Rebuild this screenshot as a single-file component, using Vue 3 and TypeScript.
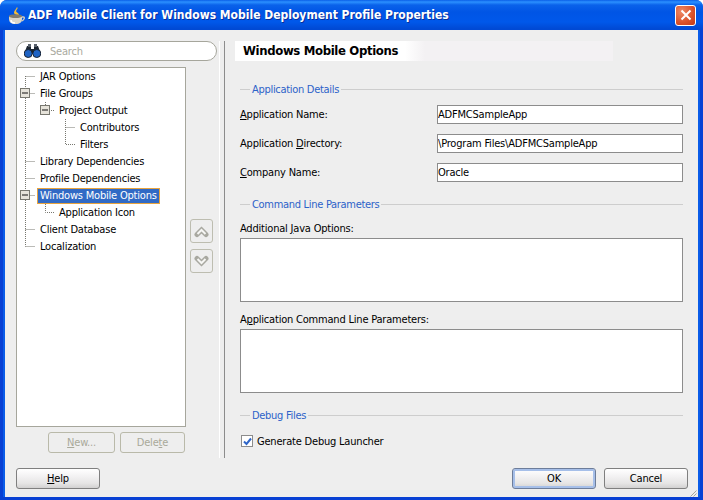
<script setup lang="ts">
interface TreeRow {
  label: string
  level: number
  selected?: boolean
}

const rows: TreeRow[] = [
  { label: 'JAR Options', level: 0 },
  { label: 'File Groups', level: 0 },
  { label: 'Project Output', level: 1 },
  { label: 'Contributors', level: 2 },
  { label: 'Filters', level: 2 },
  { label: 'Library Dependencies', level: 0 },
  { label: 'Profile Dependencies', level: 0 },
  { label: 'Windows Mobile Options', level: 0, selected: true },
  { label: 'Application Icon', level: 1 },
  { label: 'Client Database', level: 0 },
  { label: 'Localization', level: 0 },
]

// connector lines, in tree coordinates (tree box starts at 16,67)
const connectors = [
  'M9.5 9V179.5',
  'M9.5 9.5H19',
  'M9.5 26.5H19',
  'M29.5 35V43.5H39',
  'M49.5 52V77.5H59',
  'M49.5 60.5H59',
  'M9.5 94.5H19',
  'M9.5 111.5H19',
  'M9.5 128.5H19',
  'M29.5 137V145.5H39',
  'M9.5 162.5H19',
  'M9.5 179.5H19',
]

const expanders = [
  { x: 4, y: 21 },
  { x: 24, y: 38 },
  { x: 4, y: 123 },
]
</script>

<template>
  <div class="window">
    <header class="titlebar">
      <svg class="app-icon" width="18" height="18" viewBox="0 0 18 18">
        <path d="M9 0c2 2-2 3-.5 5 1 1 3 1.500 2.500 4-1-1.500-5-1-5-3.500 0-2 2-3 3-5.500z" fill="#f6bd35" />
        <path d="M1 9h13v3c0 3-2 5-6.500 5S1 15 1 12z" fill="#d9d5ca" />
        <path d="M3 13c0 2 2 3 4 3" fill="none" stroke="#fff" stroke-width="1.500" />
        <ellipse cx="7.500" cy="9.200" rx="6.500" ry="1.900" fill="#7f7a6e" />
        <path d="M14 10h1.500c1.500 0 1 3-2 4" fill="none" stroke="#cfcabd" stroke-width="1.400" />
      </svg>
      <span class="title">ADF Mobile Client for Windows Mobile Deployment Profile Properties</span>
      <button class="close" type="button" aria-label="Close">
        <svg width="12" height="12" viewBox="0 0 12 12">
          <path d="M1.500 1.500l9 9M10.500 1.500l-9 9" stroke="#fff" stroke-width="2" />
        </svg>
      </button>
    </header>

    <div class="body">
      <main class="main">
        <section class="nav">
          <div class="search">
            <svg width="17" height="14" viewBox="0 0 17 14">
              <path d="M3 2h4v3h3V2h4l3 8H0z" fill="#1c2530" />
              <circle cx="4.200" cy="9.500" r="4" fill="#1f63c4" stroke="#1c2530" />
              <circle cx="12.800" cy="9.500" r="4" fill="#1f63c4" stroke="#1c2530" />
              <rect x="4" y="0" width="3" height="3" fill="#59616b" />
              <rect x="10" y="0" width="3" height="3" fill="#59616b" />
            </svg>
            <span class="search-text">Search</span>
          </div>

          <div class="tree-row">
            <div class="tree">
              <svg class="tree-lines" width="170" height="200" viewBox="0 0 170 200">
                <path
                  v-for="d in connectors"
                  :key="d"
                  :d="d"
                  fill="none"
                  stroke="#77776f"
                  stroke-dasharray="1 1"
                />
                <g v-for="e in expanders" :key="e.x + '-' + e.y">
                  <rect :x="e.x + 0.5" :y="e.y + 0.5" width="9" height="9" fill="#e6e3da" stroke="#77776f" />
                  <path :d="`M${e.x + 2} ${e.y + 5}h6`" stroke="#111" fill="none" />
                </g>
              </svg>
              <div
                v-for="row in rows"
                :key="row.label"
                class="tree-item"
                :class="'level-' + row.level"
              >
                <span :class="{ selected: row.selected }">{{ row.label }}</span>
              </div>
            </div>
            <div class="order-buttons">
              <button class="order" type="button" aria-label="Move up">
                <svg width="15" height="13" viewBox="0 0 15 13">
                  <path d="M3 9.500L7.500 5l4.500 4.500" fill="none" stroke="#a8a8a0" stroke-width="5" stroke-linecap="round" />
                  <path d="M3.500 9L7.500 5l4 4" fill="none" stroke="#f6f6f4" stroke-width="2" />
                </svg>
              </button>
              <button class="order" type="button" aria-label="Move down">
                <svg width="15" height="13" viewBox="0 0 15 13">
                  <path d="M3 3.500L7.500 8 12 3.500" fill="none" stroke="#a8a8a0" stroke-width="5" stroke-linecap="round" />
                  <path d="M3.500 4l4 4 4-4" fill="none" stroke="#f6f6f4" stroke-width="2" />
                </svg>
              </button>
            </div>
          </div>

          <div class="tree-actions">
            <button class="btn-disabled new" type="button" disabled><u>N</u>ew...</button>
            <button class="btn-disabled delete" type="button" disabled>Dele<u>t</u>e</button>
          </div>
        </section>

        <div class="divider"></div>

        <section class="panel">
          <h1 class="panel-title"><span>Windows Mobile Options</span></h1>

          <div class="legend first"><span>Application Details</span></div>
          <div class="fields">
            <label><u>A</u>pplication Name:</label>
            <input type="text" value="ADFMCSampleApp" readonly />
            <label>Application <u>D</u>irectory:</label>
            <input type="text" value="\Program Files\ADFMCSampleApp" readonly />
            <label><u>C</u>ompany Name:</label>
            <input type="text" value="Oracle" readonly />
          </div>

          <div class="legend"><span>Command Line Parameters</span></div>
          <label class="area-label">Additional <u>J</u>ava Options:</label>
          <textarea readonly></textarea>
          <label class="area-label">A<u>p</u>plication Command Line Parameters:</label>
          <textarea readonly></textarea>

          <div class="legend"><span>Debug Files</span></div>
          <div class="check">
            <span class="box">
              <svg width="9" height="9" viewBox="0 0 9 9">
                <path d="M1 4.500l2.500 2.500L8 1.500" fill="none" stroke="#2f66c8" stroke-width="2" />
              </svg>
            </span>
            <span>Generate Debug Launcher</span>
          </div>
        </section>
      </main>

      <footer class="footer">
        <button class="btn help" type="button"><u>H</u>elp</button>
        <div class="footer-right">
          <button class="btn default" type="button">OK</button>
          <button class="btn" type="button">Cancel</button>
        </div>
      </footer>

      <svg class="grip" width="8" height="8" viewBox="0 0 8 8">
        <path d="M7.500 1.500l-6 6M7.500 4.500l-3 3" stroke="#a6a69c" fill="none" />
      </svg>
    </div>
  </div>
</template>

<style scoped>
.window {
  width: 703px;
  height: 500px;
  display: flex;
  flex-direction: column;
  background: #0840d4;
  border-radius: 7px 7px 0 0;
  overflow: hidden;
  font-family: "DejaVu Sans Condensed", "DejaVu Sans", sans-serif;
  font-size: 11px;
  letter-spacing: -0.2px;
  color: #000;
}

.titlebar {
  height: 30px;
  flex: none;
  display: flex;
  align-items: center;
  padding: 0 7px 0 8px;
  box-sizing: border-box;
  background: linear-gradient(to bottom, #0a5fe8 0, #2b90ff 2px, #0a62ea 5px, #0055e5 12px, #0058ea 22px, #0049d4 29px);
}

.app-icon {
  flex: none;
  margin-top: 2px;
}

.title {
  flex: 1;
  margin-left: 2px;
  color: #fff;
  font-size: 12px;
  font-weight: 700;
  letter-spacing: 0;
  text-shadow: 1px 1px 0 #0a2f9a;
  white-space: nowrap;
}

.close {
  width: 21px;
  height: 21px;
  padding: 0;
  display: flex;
  align-items: center;
  justify-content: center;
  border: 1px solid #fff;
  border-radius: 3px;
  background: radial-gradient(circle at 30% 30%, #ee8a66, #d9512a 60%, #c23a18);
}

.body {
  position: relative;
  flex: 1;
  display: flex;
  flex-direction: column;
  margin: 0 5px 3px 5px;
  padding-top: 11px;
  background: #eeeeee;
  box-shadow: -2px 0 0 #0a5ce8, 2px 0 0 #0a5ce8;
}

.main {
  height: 417px;
  display: flex;
  margin: 0 15px 0 11px;
}

.nav {
  width: 201px;
  flex: none;
  display: flex;
  flex-direction: column;
}

.search {
  height: 20px;
  box-sizing: border-box;
  display: flex;
  align-items: center;
  gap: 9px;
  padding-left: 7px;
  background: #fff;
  border: 1px solid #a6a69c;
  border-radius: 10px;
}

.search-text {
  color: #a9a99e;
}

.tree-row {
  display: flex;
  margin-top: 6px;
}

.tree {
  position: relative;
  width: 170px;
  height: 360px;
  box-sizing: border-box;
  padding-top: 1px;
  background: #fff;
  border: 1px solid #a6a69c;
}

.tree-lines {
  position: absolute;
  left: -1px;
  top: -1px;
}

.tree-item {
  position: relative;
  height: 17px;
  line-height: 16px;
  white-space: nowrap;
}

.level-0 { padding-left: 23px; }
.level-1 { padding-left: 42px; }
.level-2 { padding-left: 63px; }

.selected {
  display: inline-block;
  height: 16px;
  line-height: 14px;
  margin-left: -3px;
  padding: 0 2px;
  box-sizing: border-box;
  color: #fff;
  background: #316ac5;
  border: 1px solid #e8a33d;
}

.order-buttons {
  display: flex;
  flex-direction: column;
  justify-content: center;
  gap: 6px;
  margin-left: 4px;
  padding-bottom: 2px;
}

.order {
  width: 23px;
  height: 24px;
  padding: 0;
  display: flex;
  align-items: center;
  justify-content: center;
  background: #eeeeee;
  border: 1px solid #bdbdb0;
  border-radius: 3px;
}

.tree-actions {
  width: 169px;
  display: flex;
  justify-content: flex-end;
  gap: 5px;
  margin-top: 5px;
}

.btn-disabled {
  height: 21px;
  padding: 0;
  font: inherit;
  letter-spacing: inherit;
  color: #a9a99a;
  background: #eeeeee;
  border: 1px solid #b9b9a9;
  border-radius: 3px;
}

.new { width: 67px; }
.delete { width: 65px; }

.divider {
  width: 4px;
  flex: none;
  margin: 0 10px 0 2px;
  border-left: 1px solid #fff;
  border-right: 1px solid #8c8c8c;
}

.panel {
  flex: 1;
  min-width: 0;
  display: flex;
  flex-direction: column;
  padding-left: 5px;
}

.panel-title {
  height: 20px;
  width: 378px;
  margin: 0 0 0 -5px;
  padding-left: 8px;
  box-sizing: border-box;
  font-size: 13px;
  font-weight: 700;
  letter-spacing: -0.35px;
  line-height: 20px;
  background: linear-gradient(to right, #fff 0, #fff 170px, #f3f1f3 190px, #f3f1f3 100%);
}

.legend {
  height: 14px;
  display: flex;
  align-items: center;
  gap: 2px;
  margin-top: 15px;
  letter-spacing: -0.3px;
  color: #2c62c9;
}

.legend.first {
  margin-top: 21px;
}

.legend::before {
  content: "";
  width: 10px;
  height: 1px;
  background: #cdcdcd;
}

.legend::after {
  content: "";
  flex: 1;
  height: 1px;
  background: #cdcdcd;
}

.fields {
  display: grid;
  grid-template-columns: 197px 246px;
  grid-auto-rows: 19px;
  row-gap: 10px;
  align-items: center;
  margin-top: 9px;
}

input {
  width: 100%;
  height: 19px;
  box-sizing: border-box;
  padding: 0;
  font: inherit;
  letter-spacing: inherit;
  color: #000;
  background: #fff;
  border: 1px solid #8c8c8c;
  border-radius: 0;
  outline: none;
}

.area-label {
  height: 14px;
  line-height: 16px;
  margin-top: 10px;
}

textarea {
  display: block;
  height: 64px;
  margin-top: 3px;
  box-sizing: border-box;
  resize: none;
  background: #fff;
  border: 1px solid #8c8c8c;
  border-radius: 0;
  outline: none;
}

.check {
  height: 14px;
  display: flex;
  align-items: center;
  gap: 4px;
  margin-top: 12px;
  padding-left: 1px;
}

.box {
  width: 12px;
  height: 12px;
  box-sizing: border-box;
  display: flex;
  align-items: center;
  justify-content: center;
  background: #fff;
  border: 1px solid #8c8c8c;
}

.footer {
  height: 21px;
  display: flex;
  justify-content: space-between;
  margin: 10px 10px 0 11px;
}

.footer-right {
  display: flex;
  gap: 8px;
}

.btn {
  width: 84px;
  height: 21px;
  padding: 0;
  font: inherit;
  letter-spacing: inherit;
  color: #000;
  background: linear-gradient(to bottom, #ffffff 0, #f4f3f4 35%, #e6e5e5 75%, #d2d1d1 100%);
  border: 1px solid #7f7f7f;
  border-radius: 3px;
}

.default {
  box-shadow: inset 0 0 0 2px #a6bfe9;
  border-color: #6d7d9a;
}

.grip {
  position: absolute;
  right: 1px;
  bottom: 0;
}
</style>

<style>
html,
body {
  margin: 0;
  background: #fff;
}
</style>
